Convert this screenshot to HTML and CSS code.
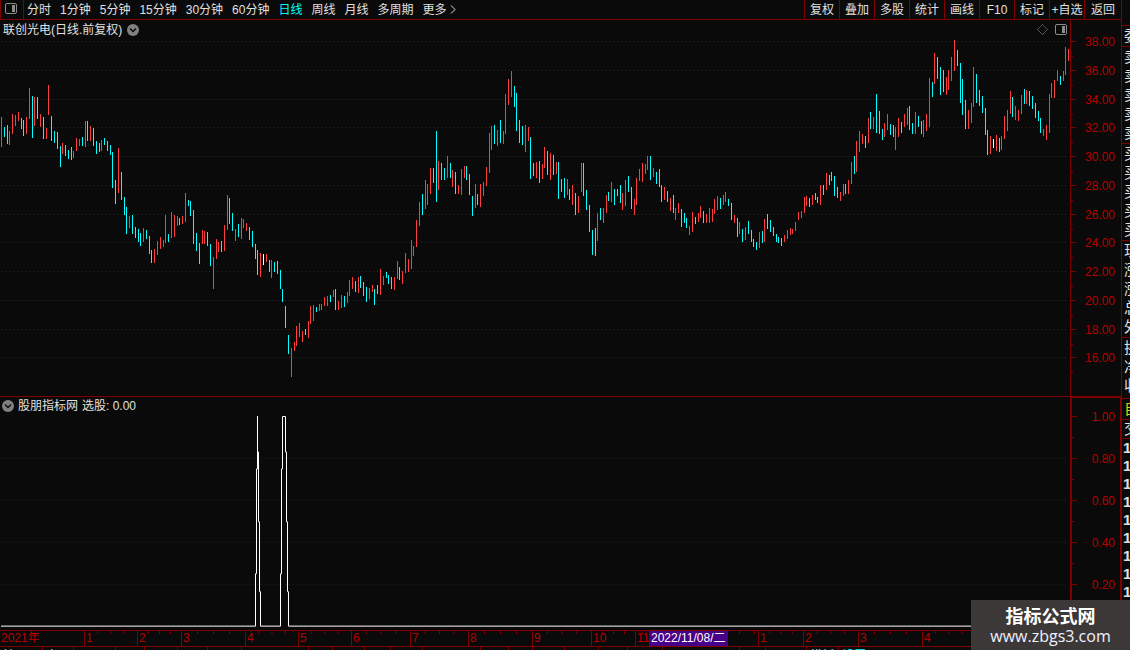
FILE: index.html
```
<!DOCTYPE html>
<html lang="zh-CN">
<head>
    <meta charset="UTF-8">
    <meta name="viewport" content="width=device-width, initial-scale=1.0">
    <title>联创光电 - 日线</title>
    <link rel="stylesheet" href="styles.css">
</head>
<body>
    <div class="main">
        <nav class="toolbar">
            <button class="panel-toggle" aria-label="侧栏">
                <svg width="12" height="11" viewBox="0 0 12 11"><rect x="0.5" y="0.5" width="11" height="10" rx="1.5" fill="none" stroke="#8c8c8c"/><rect x="7" y="2" width="3" height="7" fill="#8c8c8c"/></svg>
            </button>
            <div class="periods">
                <button>分时</button>
                <button>1分钟</button>
                <button>5分钟</button>
                <button>15分钟</button>
                <button>30分钟</button>
                <button>60分钟</button>
                <button class="active">日线</button>
                <button>周线</button>
                <button>月线</button>
                <button>多周期</button>
                <button>更多<svg width="10" height="9" viewBox="0 0 10 9"><path d="M4 0.5L8 4.5L4 8.5" fill="none" stroke="#ddd"/></svg></button>
            </div>
            <div class="tools">
                <button>复权</button>
                <button>叠加</button>
                <button>多股</button>
                <button>统计</button>
                <button>画线</button>
                <button>F10</button>
                <button>标记</button>
                <button>+自选</button>
                <button class="back">返回</button>
            </div>
        </nav>

        <section class="pane price">
            <div class="plot">
                <header>
                    <h1>联创光电(日线.前复权)</h1>
                    <button class="drop" aria-label="展开"><svg width="12" height="12" viewBox="0 0 12 12"><circle cx="6" cy="6" r="6" fill="#808080"/><path d="M3 4.5L6 7.5L9 4.5" fill="none" stroke="#0a0a0a" stroke-width="1.5"/></svg></button>
                    <span class="marks">
                        <svg width="11" height="11" viewBox="0 0 11 11"><path d="M5.5 0.5L10.5 5.5L5.5 10.5L0.5 5.5Z" fill="none" stroke="#808080" stroke-dasharray="1 0.5"/></svg>
                        <svg width="12" height="11" viewBox="0 0 12 11"><rect x="0.5" y="0.5" width="11" height="10" rx="1.5" fill="none" stroke="#8c8c8c"/><rect x="7" y="2" width="3" height="7" fill="#8c8c8c"/></svg>
                    </span>
                </header>
                <svg id="candles" viewBox="0 39 1070 357" preserveAspectRatio="none"></svg>
            </div>
            <div class="axis">
                <svg id="priceTicks" viewBox="0 20 6 376" preserveAspectRatio="none"></svg>
                <ul>
                    <li>38.00</li>
                    <li>36.00</li>
                    <li>34.00</li>
                    <li>32.00</li>
                    <li>30.00</li>
                    <li>28.00</li>
                    <li>26.00</li>
                    <li>24.00</li>
                    <li>22.00</li>
                    <li>20.00</li>
                    <li>18.00</li>
                    <li>16.00</li>
                </ul>
            </div>
        </section>

        <section class="pane signal">
            <div class="plot">
                <header>
                    <button class="drop" aria-label="展开"><svg width="12" height="12" viewBox="0 0 12 12"><circle cx="6" cy="6" r="6" fill="#808080"/><path d="M3 4.5L6 7.5L9 4.5" fill="none" stroke="#0a0a0a" stroke-width="1.5"/></svg></button>
                    <h2>股朋指标网</h2>
                    <span>选股: 0.00</span>
                </header>
                <svg id="signal" viewBox="0 414 1070 216" preserveAspectRatio="none"></svg>
            </div>
            <div class="axis">
                <svg id="signalTicks" viewBox="0 398 6 232" preserveAspectRatio="none"></svg>
                <ul>
                    <li>1.00</li>
                    <li>0.80</li>
                    <li>0.60</li>
                    <li>0.40</li>
                    <li>0.20</li>
                </ul>
            </div>
        </section>

        <div class="months">
            <span>2021年</span>
            <span>1</span>
            <span>2</span>
            <span>3</span>
            <span>4</span>
            <span>5</span>
            <span>6</span>
            <span>7</span>
            <span>8</span>
            <span>9</span>
            <span>10</span>
            <span>11</span>
            <span class="current"><b class="cursor-date">2022/11/08/二</b></span>
            <span>1</span>
            <span>2</span>
            <span>3</span>
            <span>4</span>
            <span></span>
        </div>
        <div class="tabs" id="tabs"></div>
    </div>

    <aside class="quote">
        <ul><li>委</li></ul>
        <ul><li>卖</li><li>卖</li><li>卖</li><li>卖</li><li>卖</li></ul>
        <ul><li>买</li><li>买</li><li>买</li><li>买</li><li>买</li></ul>
        <ul><li>现</li><li>涨</li><li>涨</li><li>总</li><li>外</li></ul>
        <ul class="turnover"><li>换</li><li>净</li><li>收</li></ul>
        <ul class="own"><li>自</li></ul>
        <ul class="trade"><li>交</li></ul>
        <ul class="deals"><li>1</li><li>1</li><li>1</li><li>1</li><li>1</li><li>1</li><li>1</li><li>1</li><li>1</li></ul>
    </aside>

    <div class="watermark">
        <strong>指标公式网</strong>
        <span>www.zbgs3.com</span>
    </div>

    <script src="chart.js"></script>
</body>
</html>
```
FILE: styles.css
```
* {
    box-sizing: border-box;
}
body {
    margin: 0;
    height: 100vh;
    display: grid;
    grid-template-columns: minmax(0, 1fr) 9px;
    position: relative;
    overflow: hidden;
    background: #0a0a0a;
    color: #e0e0e0;
    font-family: "Liberation Sans", "Noto Sans CJK SC", sans-serif;
    font-size: 12px;
    line-height: 18px;
}
h1, h2, ul {
    margin: 0;
    padding: 0;
    font-size: 12px;
    font-weight: normal;
    list-style: none;
}
svg {
    display: block;
}
button {
    margin: 0;
    padding: 0;
    border: none;
    background: none;
    color: inherit;
    font: inherit;
    white-space: nowrap;
    cursor: pointer;
}
.main {
    display: flex;
    flex-direction: column;
    height: 100vh;
    min-width: 0;
}

/* toolbar */
.toolbar {
    display: flex;
    flex: none;
    height: 20px;
    border-bottom: 1px solid #800000;
}
.panel-toggle {
    width: 24px;
    padding-left: 4px;
    padding-bottom: 2px;
    border-left: 1px solid #800000;
    border-right: 1px solid #800000;
}
.periods {
    display: flex;
    flex: 1;
    gap: 9px;
    padding-left: 3px;
}
.periods button {
    display: flex;
    align-items: center;
}
.periods .active {
    color: #00ffff;
}
.tools {
    display: flex;
}
.tools button {
    width: 35px;
    border-left: 1px solid #800000;
}
.tools .back {
    width: 37px;
}

/* chart panes */
.pane {
    display: flex;
    min-height: 0;
}
.price {
    flex: 377;
    border-bottom: 1px solid #800000;
}
.signal {
    flex: 233;
}
.plot {
    flex: 1;
    display: flex;
    flex-direction: column;
    min-width: 0;
}
.plot header {
    display: flex;
    align-items: center;
    flex: none;
    height: 19px;
    gap: 5px;
    padding: 0 3px 0 3px;
}
.signal header {
    height: 17px;
    gap: 4px;
    padding-left: 2px;
}
.marks {
    display: flex;
    gap: 7px;
    margin-left: auto;
}
#candles, #signal {
    flex: 1;
    width: 100%;
    min-height: 0;
    shape-rendering: crispEdges;
}
.axis {
    display: flex;
    flex: none;
    width: 51px;
    border-left: 1px solid #800000;
    color: #b80000;
}
.signal .axis {
    border-left-width: 2px;
    border-right: 1px solid #800000;
    border-top: 1px solid #800000;
}
.axis svg {
    width: 6px;
    height: 100%;
    shape-rendering: crispEdges;
}
.axis ul {
    flex: 1;
    display: flex;
    flex-direction: column;
    justify-content: space-between;
    padding: 15px 6px 31px 0;
    line-height: 14px;
    text-align: right;
}
.signal .axis ul {
    padding: 12px 5px 38px 0;
}
.grid {
    stroke: #641010;
    stroke-dasharray: 1 3;
}
.tick {
    fill: #800000;
}
.up {
    fill: #ff3c3c;
}
.down {
    fill: #00ffff;
}
.flat {
    fill: #ffffff;
}
.line {
    fill: none;
    stroke: #ffffff;
}

.months {
    display: grid;
    grid-template-columns: 84fr 53fr 44fr 64fr 53fr 53fr 59fr 58fr 64fr 59fr 44fr 14fr 109fr 45fr 55fr 64fr 53fr 146fr;
    flex: none;
    height: 17px;
    border-top: 1px solid #800000;
    border-bottom: 1px solid #800000;
    color: #b80000;
    line-height: 15px;
}
.months span {
    min-width: 0;
    padding-left: 1px;
    border-left: 1px solid #800000;
    background: linear-gradient(90deg, #800000 1px, transparent 1px) border-box 0 0 / 25% 3px repeat-x;
    white-space: nowrap;
}
.months span:first-child {
    border-left: none;
    background: none;
}
.months .current {
    padding-left: 0;
    border-left: none;
    background-size: 15px 3px;
}
.cursor-date {
    display: block;
    width: 79px;
    padding-left: 2px;
    background: #480088;
    color: #ffffff;
    font-weight: normal;
}
.tabs {
    display: grid;
    grid-template-columns: 43fr 31fr 42fr 29fr 33fr 30fr 34fr 67fr 24fr 32fr 26fr 32fr 58fr 28fr 24fr 33fr 34fr 29fr 35fr 77fr 26fr 41fr 32fr 282fr;
    flex: none;
    height: 3px;
    overflow: hidden;
}
.tabs a {
    min-width: 0;
    padding-left: 3px;
    border-right: 1px solid #800000;
    color: #e0e0e0;
    text-decoration: none;
    white-space: nowrap;
}
.tabs a.set {
    color: #00ffff;
}
.tabs a:last-child {
    border-right: none;
}

/* quote panel, cut by the window edge */
.quote {
    height: 100vh;
    padding-top: 25px;
    overflow: hidden;
    border-left: 1px solid #800000;
    line-height: 19px;
    white-space: nowrap;
}
.quote ul {
    padding: 0 0 1px 2px;
    border-top: 1px solid #800000;
    font-size: 15px;
}
.quote .turnover {
    padding-bottom: 3px;
}
.quote .own {
    color: #d8d800;
}
.quote .trade {
    padding-bottom: 0;
    line-height: 18px;
}
.quote .deals {
    padding-left: 1px;
    line-height: 18px;
    font-weight: bold;
}

.watermark {
    position: absolute;
    z-index: 2;
    right: 0;
    bottom: 0;
    display: flex;
    flex-direction: column;
    align-items: center;
    width: 159px;
    height: 50px;
    padding-top: 4px;
    background: #3d3838;
    color: #f0f0ff;
    font-family: "Open Sans", "Noto Sans CJK SC", sans-serif;
    font-size: 16px;
    line-height: 20px;
}
.watermark strong {
    font-family: "Noto Sans CJK SC", sans-serif;
    font-size: 18px;
    line-height: 22px;
    color: #ffffff;
}
```
FILE: chart.js
```
// each bar: x, high, low
const bars = {
    up: `1 117 147,9 131 145,12 114 134,15 115 126,18 112 121,26 117 134,29 88 119,34 97 126,40 114 127,46 128 139,48 85 115,
62 143 154,73 151 158,76 138 151,79 139 146,85 121 147,90 126 141,101 140 151,118 148 193,129 216 228,143 228 242,
154 249 263,157 241 255,160 237 249,163 240 247,165 215 243,171 212 238,174 215 237,177 216 226,182 216 224,185 193 222,
202 230 244,204 231 244,213 257 289,216 239 259,218 242 252,224 225 251,227 195 230,235 229 241,241 218 239,243 219 228,
246 223 231,260 253 277,266 254 262,271 260 278,291 348 377,294 342 351,296 326 346,299 323 337,302 331 342,308 321 338,
310 306 324,313 305 321,319 304 311,321 304 310,324 297 306,327 296 306,333 290 297,338 301 310,341 295 308,347 292 303,
349 280 296,352 277 289,358 277 293,369 288 299,372 285 292,380 269 295,383 276 285,394 277 290,397 261 279,402 271 284,
405 253 273,408 259 272,411 240 269,413 246 256,416 220 247,419 202 226,425 180 209,427 184 205,430 168 194,438 161 190,
447 156 178,452 170 187,458 185 194,461 169 195,464 166 178,475 184 208,480 184 207,483 182 196,486 167 186,489 133 173,
491 126 150,497 130 146,503 131 144,505 94 134,508 79 105,511 71 97,525 125 152,528 127 141,536 162 178,542 164 179,
544 147 168,550 153 180,556 162 174,567 179 195,572 185 205,578 196 213,581 163 192,597 213 241,603 208 223,
606 195 213,611 182 202,622 193 210,625 180 206,634 199 215,636 178 205,639 169 181,642 163 182,645 164 174,647 156 170,
653 168 177,664 187 200,670 198 211,675 208 220,678 203 213,689 226 235,692 212 232,698 213 222,700 206 218,706 214 223,
709 208 223,712 209 222,714 199 214,717 196 210,723 195 205,725 192 202,734 215 223,739 222 234,745 227 240,759 232 248,
764 219 242,784 235 242,787 230 239,790 228 235,792 229 234,795 222 231,798 212 220,801 211 218,804 197 213,806 196 206,
812 195 205,820 185 205,826 173 190,840 192 201,843 184 196,848 180 194,851 162 184,856 141 172,859 131 152,862 134 144,
868 118 143,873 117 129,884 123 137,887 114 130,895 127 150,898 118 137,904 114 127,907 108 125,915 112 134,923 120 137,
926 114 131,929 78 127,934 53 84,946 77 95,948 70 90,951 57 81,954 40 71,968 110 129,971 103 123,973 67 107,990 136 154,
996 135 151,1001 136 150,1004 116 139,1007 110 131,1010 91 114,1015 106 120,1018 110 121,1021 95 114,1026 90 104,
1043 129 136,1046 125 140,1049 94 133,1051 83 98,1054 80 98,1057 70 81,1063 71 81,1065 47 75,1068 49 61`,
    down: `4 127 137,7 125 144,21 118 129,23 120 136,32 96 138,37 97 119,43 117 139,51 116 141,54 131 143,57 132 149,60 146 167,
65 145 156,68 150 159,71 147 160,82 137 146,87 121 141,93 128 146,96 141 154,99 143 152,104 138 145,107 141 151,110 145 155,
112 152 188,115 180 204,121 172 200,124 197 215,126 207 234,132 215 234,135 227 238,138 229 242,140 233 246,146 230 239,
149 236 254,151 250 263,168 234 242,179 218 225,188 200 206,190 201 216,193 210 244,196 233 251,199 243 264,207 232 246,
210 244 266,221 241 252,229 198 224,232 213 231,238 224 237,249 227 240,252 231 247,255 244 259,257 250 275,269 260 272,
274 262 272,277 261 274,280 270 289,282 289 302,285 306 328,288 335 354,305 329 335,316 307 312,330 295 302,335 289 310,
344 296 307,355 281 292,360 276 288,363 282 296,366 287 302,374 289 305,377 285 294,386 272 278,388 275 284,391 277 289,
399 267 280,422 194 215,433 168 183,436 131 202,441 163 180,444 168 180,450 163 178,455 172 194,466 166 180,469 174 195,
472 196 216,477 194 205,494 125 144,500 120 143,514 86 107,516 93 131,519 120 143,522 126 145,530 137 179,533 163 176,
539 161 183,547 151 175,553 155 175,558 162 199,561 179 192,564 178 198,569 189 200,575 193 215,583 163 196,586 190 210,
589 205 232,592 230 255,595 228 256,600 208 220,608 192 201,614 189 205,617 189 196,620 185 203,628 176 192,631 187 209,
650 156 180,656 172 184,659 169 187,661 185 202,667 191 202,673 195 213,681 209 227,684 213 223,686 218 228,695 217 224,
703 211 223,720 198 209,728 199 206,731 203 220,737 218 237,742 229 242,748 221 234,751 230 242,753 239 247,756 242 250,
762 231 243,767 214 229,770 220 232,773 227 236,776 234 242,778 237 243,781 238 246,809 198 207,815 193 200,817 197 203,
823 185 195,829 175 185,831 172 181,834 176 196,837 187 198,845 184 194,854 156 174,865 136 148,870 112 129,876 94 133,
879 111 134,882 129 140,890 124 135,893 125 137,901 122 133,909 106 130,912 123 134,918 116 127,921 121 134,932 82 97,
937 57 79,940 67 95,943 70 92,957 50 66,960 63 103,962 79 115,965 100 129,976 74 103,979 90 106,982 96 113,985 108 135,
987 130 155,999 138 152,1012 97 117,1024 89 104,1029 91 106,1032 96 109,1035 103 118,1038 111 121,1040 118 133,1060 76 85`,
    flat: `263 254 265,993 139 148`
};

const priceRows = [41, 70, 99, 127, 156, 185, 214, 242, 271, 300, 329, 357];
const signalRows = [416, 458, 500, 542, 584];

function gridLines(rows) {
    return rows.map(y => `<line class="grid" x1="1" x2="1068" y1="${y + 0.5}" y2="${y + 0.5}"/>`).join('');
}

function ticks(rows, half) {
    return rows.map(y =>
        `<rect class="tick" x="0" y="${y}" width="5" height="1"/>` +
        `<rect class="tick" x="0" y="${y + half}" width="2" height="1"/>`
    ).join('');
}

// price chart
let candles = gridLines(priceRows);
for (const kind in bars) {
    bars[kind].split(',').forEach(bar => {
        const [x, high, low] = bar.trim().split(' ').map(Number);
        candles += `<rect class="${kind}" x="${x}" y="${high}" width="1" height="${low - high}"/>`;
    });
}
document.getElementById('candles').innerHTML = candles;
document.getElementById('priceTicks').innerHTML = ticks(priceRows, 15);

// signal line: 0 or 1 for each day
document.getElementById('signal').innerHTML = gridLines(signalRows.slice(1)) +
    '<path class="line" d="M1 626.5H255.5V574H256.5V469H257.5V416V452H258.5V522H259.5V592H260.5V626.5H280.5V574H281.5V469H282.5' +
    'V416.5H285.5V452H286.5V522H287.5V592H288.5V626.5H1070"/>';
document.getElementById('signalTicks').innerHTML = ticks(signalRows, 21);

const tabNames = { 0: '扩展', 1: '窗口', 22: '模板', 23: '设置' };
const tabBar = document.getElementById('tabs');
for (let i = 0; i < 24; i++) {
    const a = document.createElement('a');
    a.href = '#';
    a.textContent = tabNames[i] || '';
    if (i === 23) a.className = 'set';
    tabBar.appendChild(a);
}
```
